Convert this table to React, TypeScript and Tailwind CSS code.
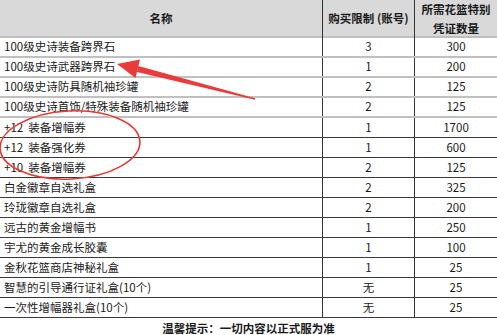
import React from 'react';

const rows = [
  { name: '100级史诗装备跨界石', limit: '3', count: '300' },
  { name: '100级史诗武器跨界石', limit: '1', count: '200' },
  { name: '100级史诗防具随机袖珍罐', limit: '2', count: '125' },
  { name: '100级史诗首饰/特殊装备随机袖珍罐', limit: '2', count: '125' },
  { name: '+12  装备增幅券', limit: '1', count: '1700' },
  { name: '+12  装备强化券', limit: '1', count: '600' },
  { name: '+10  装备增幅券', limit: '2', count: '125' },
  { name: '白金徽章自选礼盒', limit: '2', count: '325' },
  { name: '玲珑徽章自选礼盒', limit: '2', count: '200' },
  { name: '远古的黄金增幅书', limit: '1', count: '250' },
  { name: '宇尤的黄金成长胶囊', limit: '1', count: '100' },
  { name: '金秋花篮商店神秘礼盒', limit: '1', count: '25' },
  { name: '智慧的引导通行证礼盒(10个)', limit: '无', count: '25' },
  { name: '一次性增幅器礼盒(10个)', limit: '无', count: '25' },
];

export default function App() {
  return (
    <div
      className="relative w-[497px] h-[335px] bg-white text-[#1a1a1a] overflow-hidden"
      style={{ fontFamily: '"Noto Sans CJK SC", "Noto Sans", sans-serif' }}
    >
      {/* Header */}
      <div className="grid grid-cols-[322px_92px_83px] h-[38px] bg-[#d9d9d9] border-b-2 border-[#bfbfbf] text-[11.5px] font-bold">
        <div className="flex items-center justify-center">名称</div>
        <div className="flex items-center justify-center border-l-[1.5px] border-[#333]">购买限制 (账号)</div>
        <div className="flex flex-col items-center justify-center leading-[19px] border-l-[1.5px] border-[#333]">
          <span>所需花篮特别</span>
          <span>凭证数量</span>
        </div>
      </div>

      {/* Rows */}
      {rows.map((r, i) => (
        <div
          key={i}
          className={
            i < 4
              ? 'grid grid-cols-[322px_92px_83px] h-[20px] border-b-2 border-[#c0c0c0] text-[11.5px]'
              : 'grid grid-cols-[322px_92px_83px] h-[20px] border-b border-[#3a3a3a] text-[11.5px]'
          }
        >
          <div className="flex items-center pl-[4px] whitespace-pre">{r.name}</div>
          <div className="flex items-center justify-center border-l-[1.5px] border-[#333]">{r.limit}</div>
          <div className="flex items-center justify-center border-l-[1.5px] border-[#333]">{r.count}</div>
        </div>
      ))}

      {/* Footer */}
      <div className="flex justify-center pt-[2px] text-[11.5px] font-bold">温馨提示：一切内容以正式服为准</div>

      {/* Annotations */}
      <svg className="absolute left-0 top-0 pointer-events-none" width="497" height="335">
        <ellipse cx="70" cy="145" rx="70" ry="34" transform="rotate(-3 70 145)" fill="none" stroke="#e53935" strokeWidth="1.6" />
        <polygon points="255.1,98.3 254.9,99.7 137,72 138.4,66" fill="#ea3b3b" />
        <polygon points="117,64 140,59.5 135.5,78" fill="#ea3b3b" />
      </svg>
    </div>
  );
}
